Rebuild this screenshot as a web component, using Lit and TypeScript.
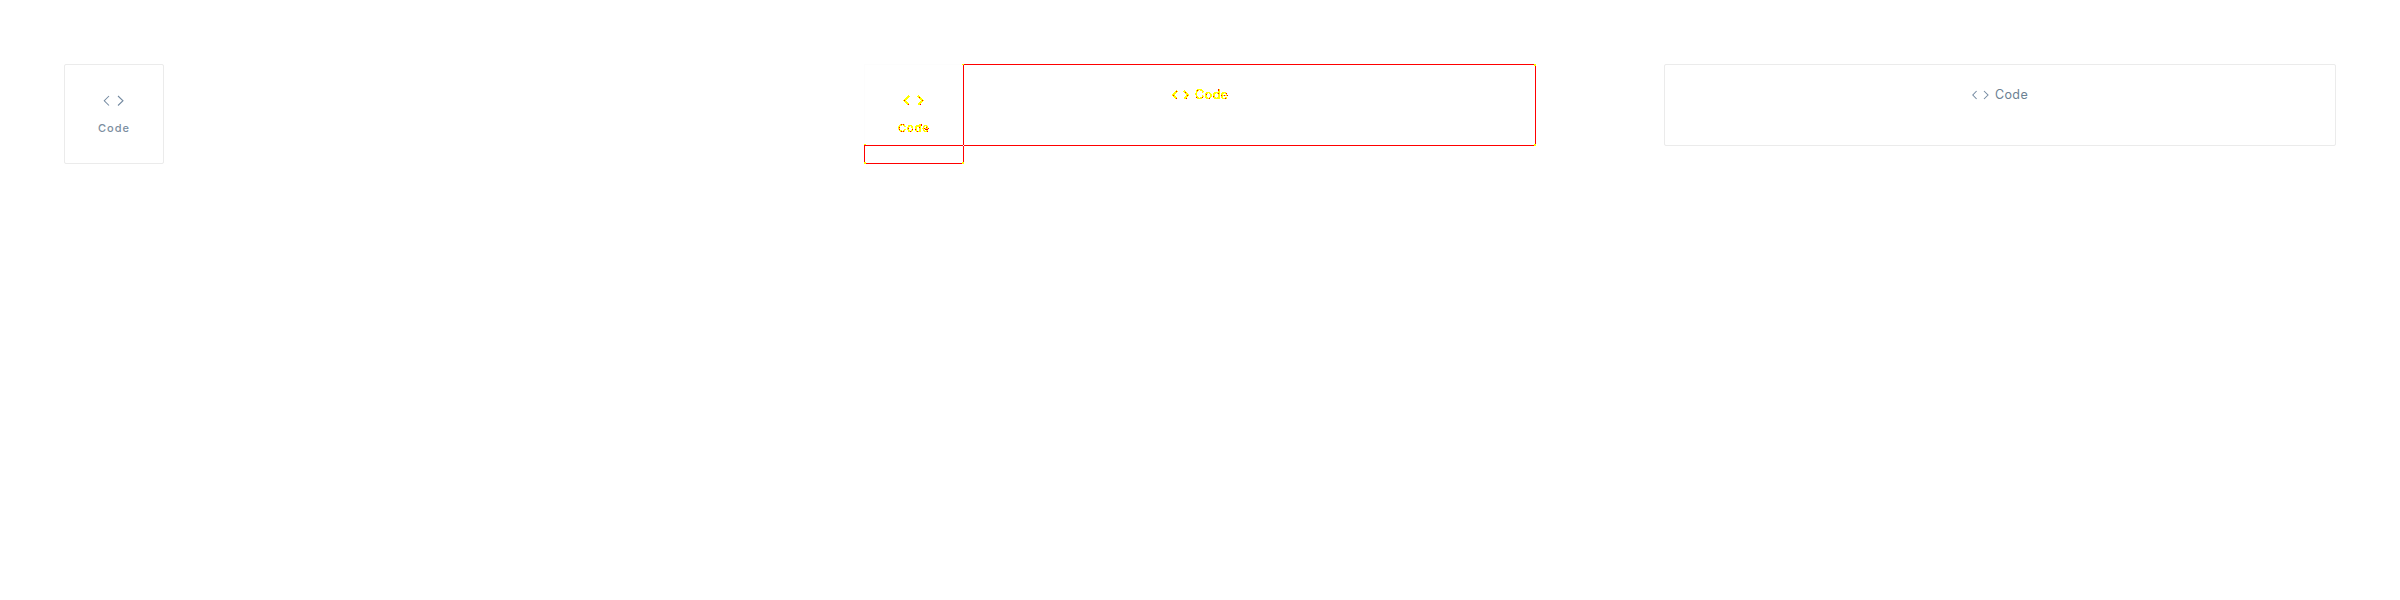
import { LitElement, html, svg, css } from "lit";
import { customElement } from "lit/decorators.js";

const chevrons = (cls: string, w: number, h: number, l: string, r: string) => html`
  <svg class=${cls} width=${w} height=${h} viewBox="0 0 ${w} ${h}"><path d=${l} /><path d=${r} /></svg>`;

const dots = (points: number[][]) => points.map(([x, y]) => svg`<rect class="red" x=${x} y=${y} width="1" height="1" />`);

@customElement("app-root")
export class AppRoot extends LitElement {
  static styles = css`
    :host {
      display: grid;
      grid-template-columns: repeat(3, 800px);
      height: 600px;
      background: #fff;
      font-family: Inter, sans-serif;
      color: #6c8193;
    }
    .pane { padding: 64px; box-sizing: border-box; }
    .diff { padding: 0; }
    .card, .bar {
      box-sizing: border-box;
      border: 1px solid #ebebeb;
      border-radius: 2px;
      display: flex;
    }
    .card {
      width: 100px;
      height: 100px;
      flex-direction: column;
      align-items: center;
      padding-top: 30px;
    }
    .bar {
      width: 672px;
      height: 82px;
      justify-content: center;
      padding: 21px 0 0 0;
      gap: 5px;
    }
    svg { display: block; }
    path { fill: none; stroke: #7389a0; stroke-width: 1.05; }
    .small { font: 500 11px/16px Inter, sans-serif; letter-spacing: 1px; margin-top: 13px; color: #7b8ea0; }
    .large { font-size: 12.5px; line-height: 17px; letter-spacing: 0.4px; }
    .shift { margin-top: 4px; }
    .canvas text { fill: #ff0; }
    .canvas path { stroke: #ff0; stroke-width: 1.5; shape-rendering: crispEdges; }
    .canvas .line { stroke: #f00; stroke-width: 1; }
    .canvas .same { stroke: #fdfdfd; stroke-width: 1; }
    .red { fill: #f00; }
    .yellow { fill: #ff0; }
    .smalltext { font: 400 11px Inter, sans-serif; letter-spacing: 1px; }
    .largetext { font-size: 12.5px; letter-spacing: 0.4px; }
  `;

  render() {
    return html`
      <section class="pane">
        <div class="card">
          ${chevrons("", 22, 12, "M6 1L1.3 5.75L6 10.5", "M15 1L20 5.75L15 10.5")}
          <span class="small">Code</span>
        </div>
      </section>
      <section class="pane diff">
        <svg class="canvas" width="800" height="600" viewBox="0 0 800 600">
          <filter id="hard" x="-10%" y="-20%" width="120%" height="140%">
            <feComponentTransfer><feFuncA type="linear" slope="10" intercept="-1.2" /></feComponentTransfer>
          </filter>
          <path class="same" d="M64.5 144V64.5H163" />
          <path class="line" d="M164 64.5H735.5V145.5H164M163 145.5H64.5V163.5H163.5V146M163.5 145V65" />
          <rect class="yellow" x="162" y="64" width="2" height="1" />
          <rect class="yellow" x="734" y="64" width="2" height="2" />
          <rect class="yellow" x="734" y="144" width="2" height="2" />
          <rect class="yellow" x="64" y="162" width="2" height="2" />
          <rect class="yellow" x="162" y="162" width="2" height="2" />
          <rect class="yellow" x="64" y="144" width="2" height="1" />
          <path d="M109 96L104.5 100.5L109 105M118 96L122.5 100.5L118 105" />
          <path d="M377 91L373 95L377 99M384 91L388 95L384 99" />
          <text class="smalltext" x="98" y="132" filter="url(#hard)">Code</text>
          <text class="largetext" x="395" y="99" filter="url(#hard)">Code</text>
          ${dots([
            [104, 100], [108, 104], [119, 97], [122, 100], [120, 104],
            [373, 95], [376, 98], [376, 91], [385, 92], [387, 95], [386, 98],
            [101, 124], [103, 124], [99, 127], [99, 129], [101, 131], [103, 131],
            [108, 128], [110, 131], [112, 129], [115, 129], [117, 131], [121, 124], [121, 125], [119, 127],
            [124, 128], [125, 129], [126, 129], [127, 129], [128, 128], [126, 127], [127, 131],
            [397, 90], [396, 97], [402, 97], [406, 94], [409, 98], [413, 96], [418, 89], [418, 90], [418, 93],
            [421, 95], [424, 95], [426, 93], [427, 95], [425, 98],
          ])}
        </svg>
      </section>
      <section class="pane">
        <div class="bar">
          ${chevrons("shift", 18, 10, "M4.6 1L0.8 5L4.6 9", "M12 1L16 5L12 9")}
          <span class="large">Code</span>
        </div>
      </section>`;
  }
}
